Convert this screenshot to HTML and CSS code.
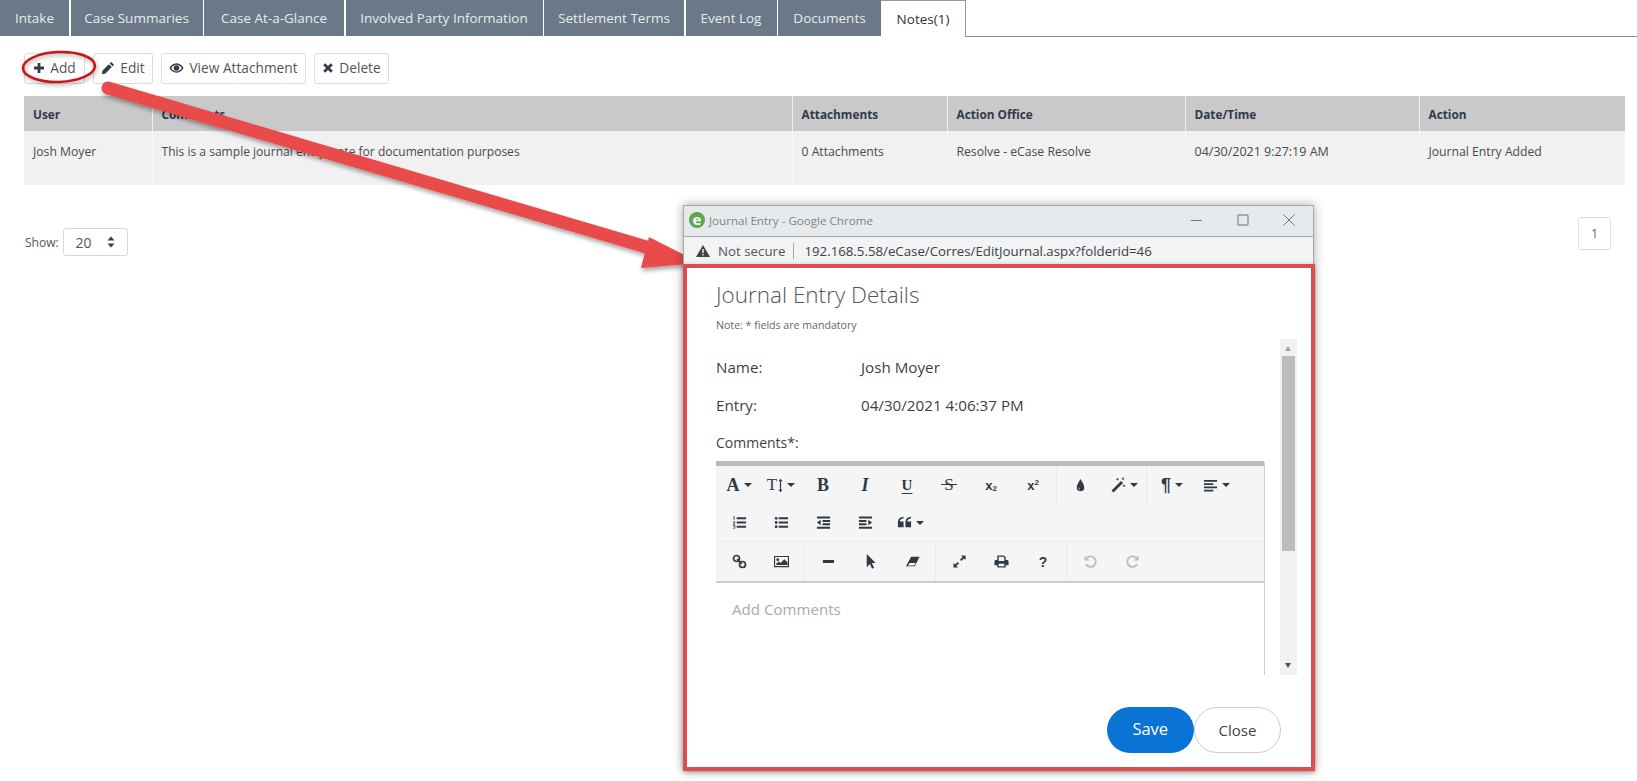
FILE: index.html
```html
<!DOCTYPE html>
<html lang="en">
<head>
<meta charset="utf-8">
<title>Notes</title>
<link rel="stylesheet" href="styles.css">
</head>
<body>
<nav class="tabs">
  <a class="tab t1">Intake</a>
  <a class="tab t2">Case Summaries</a>
  <a class="tab t3">Case At-a-Glance</a>
  <a class="tab t4">Involved Party Information</a>
  <a class="tab t5">Settlement Terms</a>
  <a class="tab t6">Event Log</a>
  <a class="tab t7">Documents</a>
  <a class="tab active">Notes(1)</a>
  <span class="tab-rest"></span>
</nav>

<div class="actions">
  <button class="btn b-add"><svg class="bi" viewBox="0 0 12 12"><path d="M4.6 1h2.8v3.6H11v2.8H7.4V11H4.6V7.4H1V4.6h3.6z"/></svg>Add</button>
  <button class="btn b-edit"><svg class="bi pen" viewBox="0 0 14 14"><path d="M10.2.9l2.9 2.9-1.5 1.5-2.9-2.900zM7.900 3.200l2.900 2.900-6.300 6.300-3.700.8.800-3.700z"/></svg>Edit</button>
  <button class="btn b-view"><svg class="bi eye" viewBox="0 0 16 12"><path fill-rule="evenodd" d="M8 1c3.500 0 6.300 2.300 7.500 5C14.300 8.700 11.500 11 8 11S1.700 8.700.5 6C1.700 3.300 4.500 1 8 1zm0 1.400C5.900 2.400 3.700 3.700 2.300 6 3.700 8.300 5.900 9.600 8 9.600s4.300-1.300 5.700-3.600C12.300 3.700 10.100 2.400 8 2.400zM8 3a3 3 0 1 1 0 6 3 3 0 0 1 0-6z"/></svg>View Attachment</button>
  <button class="btn b-del"><svg class="bi" viewBox="0 0 12 12"><path d="M3.200 1.200L6 4l2.800-2.800 2 2L8 6l2.800 2.800-2 2L6 8l-2.800 2.800-2-2L4 6 1.200 3.200z"/></svg>Delete</button>
</div>

<table class="grid">
  <colgroup>
    <col class="c1"><col class="c2"><col class="c3"><col class="c4"><col class="c5"><col class="c6">
  </colgroup>
  <thead>
    <tr><th>User</th><th>Comments</th><th>Attachments</th><th>Action Office</th><th>Date/Time</th><th>Action</th></tr>
  </thead>
  <tbody>
    <tr>
      <td>Josh Moyer</td>
      <td class="long">This is a sample journal entry/note for documentation purposes</td>
      <td>0 Attachments</td>
      <td>Resolve - eCase Resolve</td>
      <td class="date">04/30/2021 9:27:19 AM</td>
      <td>Journal Entry Added</td>
    </tr>
  </tbody>
</table>

<div class="pager">
  <div class="show">
    <span>Show:</span>
    <div class="select"><span>20</span><svg class="sort" viewBox="0 0 8 12"><path d="M4 .5L7.500 4.500H.5zM4 11.500L.5 7.500h7z"/></svg></div>
  </div>
  <div class="page-btn">1</div>
</div>

<svg class="arrow" viewBox="0 0 1637 781" aria-hidden="true">
  <defs>
    <filter id="sh" x="-5%" y="-20%" width="110%" height="140%"><feDropShadow dx="1" dy="3" stdDeviation="2" flood-color="#000" flood-opacity=".35"/></filter>
  </defs>
  <g filter="url(#sh)">
    <line class="shaft" x1="108" y1="88" x2="660" y2="251"/>
    <path class="head" d="M649 237L700 263 641 268z"/>
  </g>
</svg>

<svg class="ring" viewBox="0 0 80 36" aria-hidden="true">
  <ellipse cx="39" cy="17" rx="36" ry="15" transform="rotate(-2 39 17)"/>
</svg>

<section class="win">
  <header class="win-title">
    <span class="favicon">e</span>
    <span class="win-name">Journal Entry - Google Chrome</span>
    <svg class="ctl" viewBox="0 0 12 12"><path d="M0 6.500h11"/></svg>
    <svg class="ctl" viewBox="0 0 12 12"><path d="M1 1h10v10H1z"/></svg>
    <svg class="ctl" viewBox="0 0 12 12"><path d="M.5.5l11 11M11.500.5l-11 11"/></svg>
  </header>
  <div class="win-addr">
    <svg class="warn" viewBox="0 0 14 12"><path fill-rule="evenodd" d="M7 0l7 12H0zM6.300 4v4h1.400V4zm0 5v1.400h1.400V9z"/></svg>
    <span class="insecure">Not secure</span>
    <span class="url">192.168.5.58/eCase/Corres/EditJournal.aspx?folderid=46</span>
  </div>
  <div class="win-body">
    <h1>Journal Entry Details</h1>
    <p class="note">Note: * fields are mandatory</p>
    <div class="scroller">
      <div class="scroll-body">
        <div class="field"><label>Name:</label><span>Josh Moyer</span></div>
        <div class="field"><label>Entry:</label><span>04/30/2021 4:06:37 PM</span></div>
        <div class="field"><label class="cmt">Comments*:</label></div>
        <div class="editor">
          <div class="bar">
            <div class="row">
              <div class="grp g1">
                <span class="tool"><b class="serif big">A</b><i class="caret"></i></span>
                <span class="tool"><b class="serif tt">T</b><svg class="mini" viewBox="0 0 6 16"><path d="M3 0l2.500 3H3.700v10h1.800L3 16 .5 13h1.800V3H.5z"/></svg><i class="caret"></i></span>
                <span class="tool"><b class="serif big">B</b></span>
                <span class="tool"><b class="serif big ital">I</b></span>
                <span class="tool"><b class="serif und">U</b></span>
                <span class="tool"><b class="serif strike">S</b></span>
                <span class="tool"><b class="sans">x<sub>2</sub></b></span>
                <span class="tool"><b class="sans">x<sup>2</sup></b></span>
              </div>
              <div class="grp g2">
                <span class="tool"><svg class="ic" viewBox="0 0 16 16"><path fill-rule="evenodd" d="M8 1c1 2.500 4 5.500 4 9a4 4 0 0 1-8 0C4 6.500 7 3.500 8 1zM6.400 9.500C5.700 11 6.200 12.800 8 13 6.900 12.200 6.700 11 6.400 9.500z"/></svg></span>
                <span class="tool w45"><svg class="ic wand" viewBox="0 0 16 16"><path d="M11 4l2 2-9.500 9.500-2-2z"/><path class="spark" d="M7.500 1v2.500M6.200 2.200h2.600M13 .5v2.500M11.700 1.700h2.600M14 7.500v2.500M12.700 8.700h2.600"/></svg><i class="caret"></i></span>
              </div>
              <div class="grp last">
                <span class="tool w46"><b class="sans para">¶</b><i class="caret"></i></span>
                <span class="tool"><svg class="ic" viewBox="0 0 16 16"><path d="M1 2h14v2H1zM1 5.500h10v2H1zM1 9h14v2H1zM1 12.500h10v2H1z"/></svg><i class="caret"></i></span>
              </div>
            </div>
            <div class="row line">
              <span class="tool"><svg class="ic" viewBox="0 0 16 16"><path d="M5 2.500h10v2H5zM5 7h10v2H5zM5 11.500h10v2H5zM1 1.500h1.800v3.500H1.800V2.500H1zM1 7h2.500v.9L2 9.300h1.500v.7H1v-.8l1.500-1.400H1zM1 11h2.500v3.500H1v-.7h1.600v-.7H1.400v-.6h1.200v-.7H1z"/></svg></span>
              <span class="tool"><svg class="ic" viewBox="0 0 16 16"><path d="M5 2.500h10v2H5zM5 7h10v2H5zM5 11.500h10v2H5z"/><circle cx="2.300" cy="3.500" r="1.500"/><circle cx="2.300" cy="8" r="1.500"/><circle cx="2.300" cy="12.500" r="1.500"/></svg></span>
              <span class="tool"><svg class="ic" viewBox="0 0 16 16"><path d="M1 1.500h14v2.200H1zM7 5.200h8v2.200H7zM7 8.800h8V11H7zM1 12.500h14v2.200H1zM5 5v6L1 8z"/></svg></span>
              <span class="tool"><svg class="ic" viewBox="0 0 16 16"><path d="M1 1.500h14v2.200H1zM1 5.200h8v2.200H1zM1 8.800h8V11H1zM1 12.500h14v2.200H1zM11 5v6l4-3z"/></svg></span>
              <span class="tool w48"><svg class="ic" viewBox="0 0 16 16"><path d="M7 3.500C4 3.800 3 5.500 3 7h4v6H1V7.500C1 4 3.500 2 7 1.800zM15 3.500C12 3.800 11 5.500 11 7h4v6H9V7.500C9 4 11.500 2 15 1.800z"/></svg><i class="caret"></i></span>
            </div>
            <div class="row tall">
              <div class="grp g3">
                <span class="tool"><svg class="ic" viewBox="0 0 16 16"><g class="link"><circle cx="4.800" cy="4.800" r="3.200"/><circle cx="11.200" cy="11.200" r="3.200"/><path d="M5.500 5.500l5 5"/></g></svg></span>
                <span class="tool"><svg class="ic" viewBox="0 0 16 14"><path fill-rule="evenodd" d="M0 1h16v12H0zm1.200 1.200v9.600h13.600V2.200z"/><circle cx="4" cy="5" r="1.500"/><path d="M2.500 10.800V9l2.500-2 2 1.500L11 4.500l3.500 3.500v2.800z"/></svg></span>
              </div>
              <div class="grp g4">
                <span class="tool"><svg class="ic" viewBox="0 0 16 16"><rect x="2" y="6.500" width="12" height="3" rx=".6"/></svg></span>
                <span class="tool"><svg class="ic" viewBox="0 0 16 16"><path d="M4 0l9.500 9.600H9.500l2.300 5-2.200 1.100-2.200-5.100L4 14z"/></svg></span>
                <span class="tool"><svg class="ic" viewBox="0 0 16 16"><path fill-rule="evenodd" d="M6.500 3h9L10.500 13H1zM5 9.500L3 12.200h6.800L11.500 9.500z"/></svg></span>
              </div>
              <div class="grp g5">
                <span class="tool"><svg class="ic" viewBox="0 0 16 16"><path d="M9.500 1.500h5v5l-1.800-1.800-2.800 2.800-1.400-1.400 2.800-2.800zM6.500 14.500h-5v-5l1.800 1.800 2.800-2.800 1.400 1.400-2.800 2.800z"/></svg></span>
                <span class="tool"><svg class="ic" viewBox="0 0 16 16"><path fill-rule="evenodd" d="M3.500 1.500h7L12.500 3.500V6.500h1.500A1.500 1.500 0 0 1 15.500 8V12h-3v2.500h-9V12H.5V8A1.500 1.500 0 0 1 2 6.500h1.500zM5 3v4.500h6V4.200L10 3zM5 10.500V13h6v-2.500z"/></svg></span>
                <span class="tool"><b class="sans q">?</b></span>
              </div>
              <div class="grp last">
                <span class="tool off"><svg class="ic" viewBox="0 0 16 16"><path class="arc" d="M4 4.200A5.600 5.600 0 1 1 3.200 11"/><path d="M1.500 1.500l5.500 5.500H1.500z"/></svg></span>
                <span class="tool off"><svg class="ic" viewBox="0 0 16 16"><path class="arc" d="M12 4.200A5.600 5.600 0 1 0 12.800 11"/><path d="M14.500 1.500L9 7h5.500z"/></svg></span>
              </div>
            </div>
          </div>
          <div class="edit-area">Add Comments</div>
        </div>
      </div>
      <div class="scrollbar">
        <i class="sb-up"></i>
        <i class="sb-thumb"></i>
        <i class="sb-down"></i>
      </div>
    </div>
    <div class="foot">
      <button class="pill save">Save</button>
      <button class="pill close">Close</button>
    </div>
  </div>
</section>
</body>
</html>
```
FILE: styles.css
```css
* { box-sizing: border-box; }
html, body { margin: 0; height: 100%; }
body {
  position: relative;
  width: 1637px;
  height: 781px;
  overflow: hidden;
  background: #fff;
  font-family: "Open Sans", "Liberation Sans", sans-serif;
  font-size: 12.2px;
  color: #4a4a4a;
}

/* tabs */
.tabs { display: flex; height: 37px; }
.tab {
  display: flex;
  align-items: center;
  justify-content: center;
  height: 36px;
  background: #6b7887;
  color: #e9ebee;
  font-size: 13.5px;
  margin-right: 1.5px;
}
.t1 { width: 69px; }
.t2 { width: 132px; }
.t3 { width: 140px; }
.t4 { width: 197px; }
.t5 { width: 140px; }
.t6 { width: 91px; }
.t7 { width: 103px; margin-right: 0; }
.tab.active {
  width: 85px;
  height: 37px;
  margin-right: 0;
  background: #fff;
  color: #333;
  border: 1px solid #999;
  border-bottom: 0;
  border-left: 0;
}
.tab-rest { flex: 1; height: 37px; border-bottom: 1px solid #8a8a8a; }

/* action buttons */
.actions { display: flex; gap: 8px; margin: 16px 0 0 24px; }
.btn {
  display: flex;
  align-items: center;
  justify-content: center;
  gap: 5px;
  height: 31px;
  padding: 0 0 2px;
  background: #fff;
  border: 1px solid #dcdcdc;
  border-radius: 3px;
  font: inherit;
  font-size: 13.7px;
  color: #555;
}
.b-add { width: 61px; }
.b-edit { width: 60px; }
.b-view { width: 145px; }
.b-del { width: 75px; }
.bi { width: 12px; height: 12px; fill: #333d4a; }
.bi.eye { width: 15px; }
.bi.pen { width: 14px; height: 14px; }

/* table */
.grid {
  width: 1601px;
  margin: 12px 0 0 24px;
  border-collapse: collapse;
  table-layout: fixed;
}
.c1 { width: 128px; }
.c2 { width: 640px; }
.c3 { width: 155px; }
.c4 { width: 238px; }
.c5 { width: 234px; }
.c6 { width: 206px; }
.grid th {
  height: 35px;
  padding: 0 9px;
  background: #c9c9c9;
  border-left: 1px solid #f0f0f0;
  color: #2f3a4a;
  font-size: 11.8px;
  font-weight: 700;
  text-align: left;
}
.grid td {
  height: 54px;
  padding: 11px 9px 0;
  background: #f1f1f1;
  border-left: 1px solid #f6f6f6;
  vertical-align: top;
  line-height: 20px;
}
.grid td.long { font-size: 12.05px; }
.grid td.date { font-size: 12.5px; }
.grid th:first-child, .grid td:first-child { border-left: 0; }

/* pager */
.pager {
  display: flex;
  justify-content: space-between;
  align-items: flex-start;
  margin: 32px 26px 0 25px;
}
.show { display: flex; align-items: center; gap: 4px; margin-top: 11px; color: #555; font-size: 12px; }
.select {
  display: flex;
  align-items: center;
  justify-content: space-between;
  width: 65px;
  height: 28px;
  padding: 0 12px;
  border: 1px solid #d8d8d8;
  border-radius: 3px;
  color: #555;
  font-size: 14px;
}
.sort { width: 8px; height: 12px; fill: #333d4a; }
.page-btn {
  display: flex;
  align-items: center;
  justify-content: center;
  width: 33px;
  height: 33px;
  border: 1px solid #dedede;
  border-radius: 3px;
  color: #666;
  font-size: 12.5px;
}

/* annotations */
.arrow { position: absolute; left: 0; top: 0; width: 1637px; height: 781px; }
.shaft { stroke: #e84b48; stroke-width: 13; stroke-linecap: round; }
.head { fill: #e84b48; }
.ring {
  position: absolute;
  left: 20px;
  top: 50px;
  width: 80px;
  height: 36px;
  filter: drop-shadow(1px 2px 2px rgba(0, 0, 0, .35));
}
.ring ellipse { fill: none; stroke: #c8161d; stroke-width: 2.500; }

/* popup window */
.win {
  position: absolute;
  left: 683px;
  top: 205px;
  width: 631px;
  height: 566px;
  display: flex;
  flex-direction: column;
  border-top: 1px solid #a8a8a8;
  background: #fff;
  box-shadow: 0 0 10px rgba(0, 0, 0, .35);
}
.win-title {
  display: flex;
  align-items: center;
  height: 31px;
  flex: none;
  padding: 0 18px 2px 5px;
  background: #e7eaed;
  border: solid #a8a8a8;
  border-width: 0 1px 1px;
}
.favicon {
  display: flex;
  align-items: center;
  justify-content: center;
  width: 16px;
  height: 16px;
  border-radius: 50%;
  background: #5aa84f;
  color: #fff;
  font-size: 15px;
  font-weight: 700;
  line-height: 14px;
  padding-bottom: 2px;
}
.win-name { flex: 1; margin-left: 4px; color: #808488; font-size: 11.6px; }
.ctl { width: 12px; height: 12px; margin-left: 34px; fill: none; stroke: #6f7377; stroke-width: 1; }
.win-addr {
  display: flex;
  align-items: center;
  height: 27px;
  flex: none;
  padding-left: 12px;
  background: #f1f3f4;
  border: solid #a8a8a8;
  border-width: 0 1px;
}
.warn { width: 14px; height: 12px; fill: #444; }
.insecure { margin-left: 8px; padding-right: 8px; color: #555; font-size: 13.3px; border-right: 1px solid #a8a8a8; line-height: 16px; }
.url { margin-left: 10px; color: #3c4043; font-size: 13.25px; }
.win-body {
  flex: 1;
  min-height: 0;
  width: 632px;
  display: flex;
  flex-direction: column;
  padding: 11px 14px 0 29px;
  border: 4px solid #dc4e4c;
  background: #fff;
  box-shadow: 0 1px 4px rgba(0, 0, 0, .3);
}
.win-body h1 { margin: 0; color: #555; font-size: 22.500px; font-weight: 300; line-height: 32px; }
.note { margin: 6px 0 0; color: #666; font-size: 10.6px; line-height: 16px; }

.scroller { display: flex; height: 336px; flex: none; margin-top: 6px; }
.scroll-body { flex: 1; min-width: 0; padding-top: 16px; overflow: hidden; }
.field { display: flex; height: 24px; margin-bottom: 14px; line-height: 24px; color: #3f3f3f; font-size: 15.2px; }
.field label { width: 145px; flex: none; }
.field label.cmt { font-size: 14px; }
.field:nth-child(3) { margin-bottom: 6px; }
.scrollbar { position: relative; width: 17px; background: #f1f1f1; }
.sb-up, .sb-down { position: absolute; left: 5px; border: 3.500px solid transparent; }
.sb-up { top: 4px; border-bottom: 5px solid #a0a0a0; }
.sb-down { bottom: 4px; border-top: 5px solid #505050; }
.sb-thumb { position: absolute; left: 2px; right: 2px; top: 17px; height: 195px; background: #bcbcbc; }

.editor { width: 550px; margin-left: -1px; }
.bar {
  background: #f5f5f5;
  border: solid #cfcfcf;
  border-width: 5px 1px 2px;
  border-top-color: #bbb;
  border-bottom-color: #ccc;
  border-radius: 2px 2px 0 0;
}
.row { display: flex; align-items: stretch; height: 38px; padding-left: 2px; color: #2f3a46; }
.row.tall { height: 39px; }
.row.line { border-bottom: 1px solid #ebebeb; }
.grp { display: flex; border-right: 1px solid #ebebeb; padding-right: 2px; margin-right: 2px; }
.g2 { padding-right: 0; }
.grp.last { border: 0; }
.tool { display: flex; align-items: center; justify-content: center; gap: 4px; width: 42px; flex: none; }
.w45 { width: 45px; }
.w46 { width: 46px; }
.w48 { width: 48px; }
.caret { width: 0; height: 0; border: 4px solid transparent; border-top-color: #2f3a46; border-bottom: 0; }
.serif { font-family: "Liberation Serif", serif; font-size: 17px; }
.big { font-size: 18px; }
.tt { font-size: 17px; font-weight: 400; }
.ital { font-style: italic; }
.und { font-size: 15px; font-weight: 700; text-decoration: underline; text-underline-offset: 3px; }
.strike { position: relative; font-size: 17px; font-weight: 400; }
.strike::after { content: ""; position: absolute; left: -3px; right: -3px; top: 9px; height: 1px; background: #2f3a46; }
.sans { font-family: "Liberation Sans", sans-serif; font-size: 13px; }
.sans sub, .sans sup { font-size: 8px; line-height: 0; }
.sans sub { vertical-align: -1px; }
.para { font-size: 18px; }
.q { font-size: 14px; }
.mini { width: 5px; height: 15px; margin-left: -3px; fill: #2f3a46; }
.ic { width: 15px; height: 15px; fill: #2f3a46; }
.ic.wand { width: 16px; height: 16px; }
.spark { fill: none; stroke: #2f3a46; stroke-width: .8; }
.link { fill: none; stroke: #2f3a46; stroke-width: 1.800; }
.off .ic { fill: #bdbdbd; }
.arc { fill: none; stroke: #bdbdbd; stroke-width: 2; }
.edit-area {
  height: 95px;
  padding: 14px 15px 0 16px;
  border: solid #cfcfcf;
  border-width: 0 1px;
  color: #aaa;
  font-size: 15.1px;
  line-height: 24px;
}

.foot { display: flex; justify-content: flex-end; margin: 32px 16px 0 0; }
.pill {
  width: 87px;
  height: 46px;
  padding: 0;
  border-radius: 23px;
  font: inherit;
  font-size: 15px;
}
.save { width: 87.500px; padding-bottom: 4px; background: #0a74d6; border: 0; color: #fff; font-size: 16.500px; }
.close { background: #fff; border: 1px solid #ccc; color: #444; }
```
